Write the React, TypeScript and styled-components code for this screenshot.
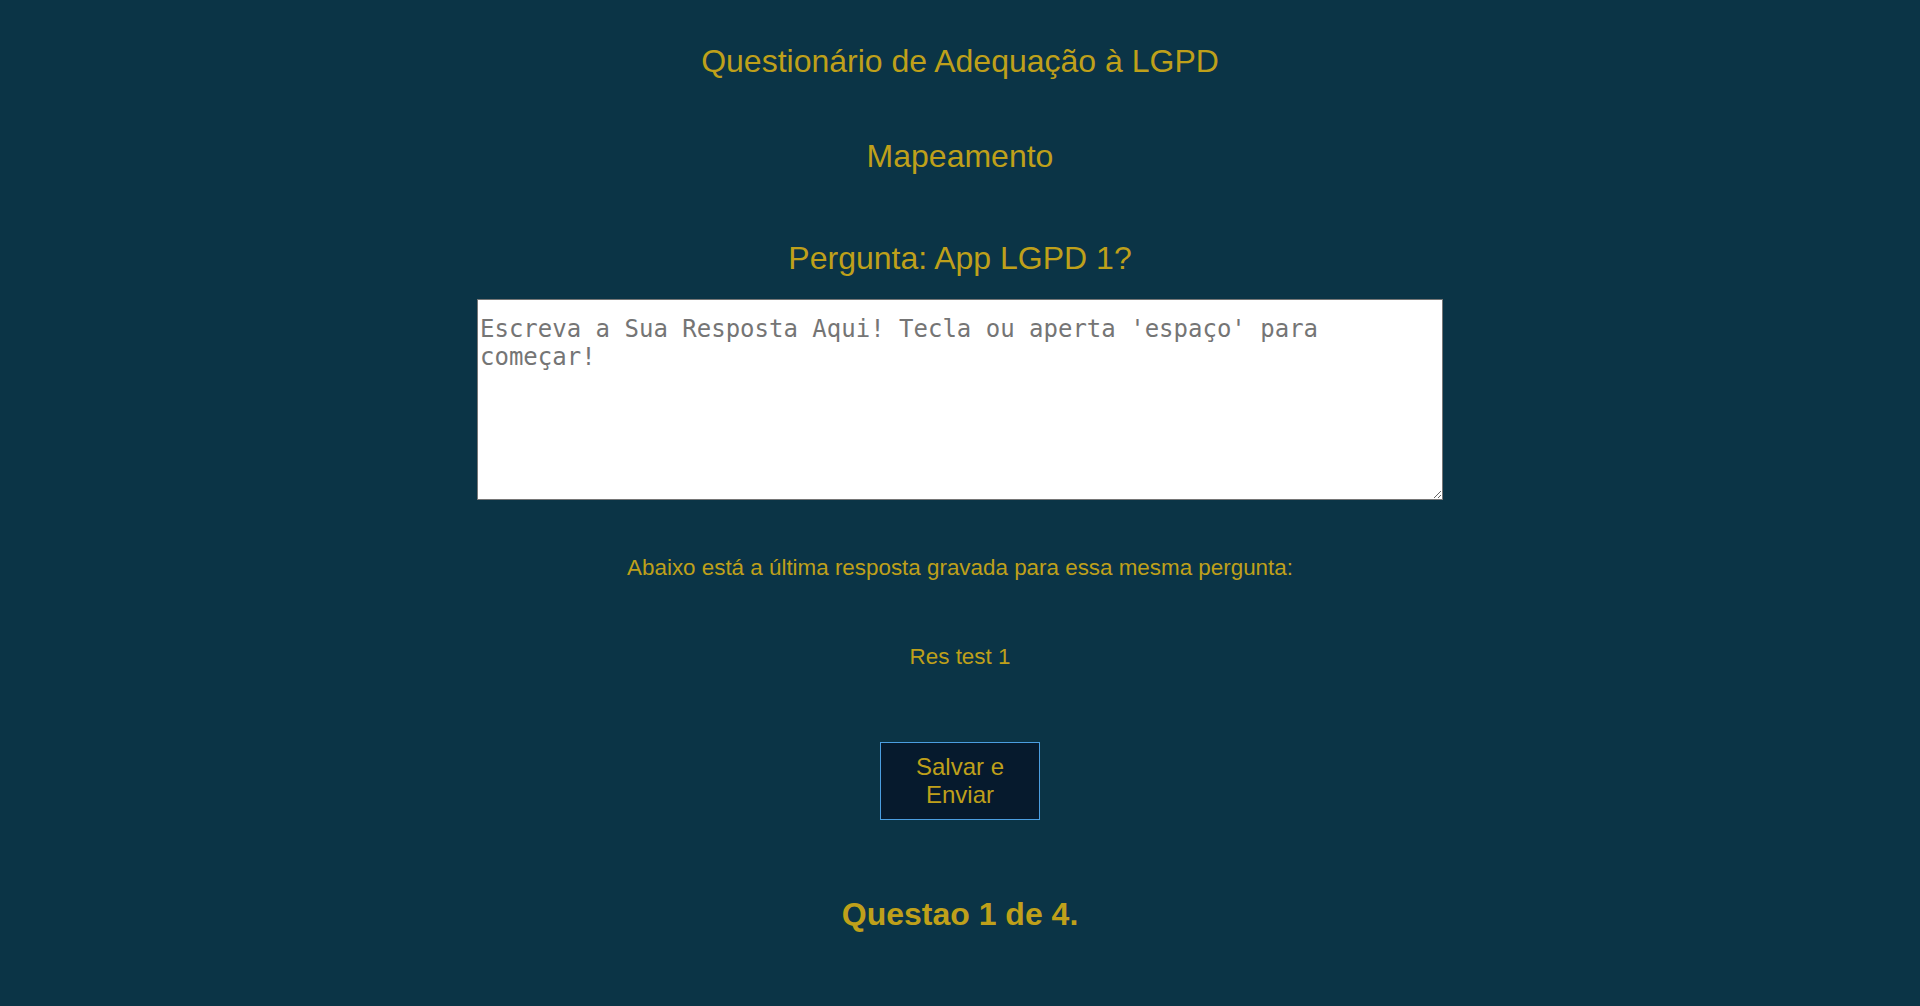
import styled, { createGlobalStyle } from "styled-components";

const GlobalStyle = createGlobalStyle`
  html, body {
    margin: 0;
    padding: 0;
    background: #0b3446;
  }
  body {
    font-family: "Liberation Sans", Arial, sans-serif;
    min-height: 100vh;
  }
`;

const Page = styled.main`
  display: flex;
  flex-direction: column;
  align-items: center;
  padding-top: 43px;
  color: #bfa01a;
  min-height: 1006px;
  box-sizing: border-box;
`;

const Heading = styled.h1<{ gap?: number }>`
  margin: ${(p) => p.gap ?? 0}px 0 0;
  font-size: 32px;
  font-weight: 400;
  line-height: normal;
  text-align: center;
`;

const AnswerBox = styled.textarea`
  margin-top: 22px;
  width: 966px;
  height: 201px;
  box-sizing: border-box;
  padding: 15px 2px 2px;
  border: 1px solid #767676;
  background: #ffffff;
  font-family: "DejaVu Sans Mono", monospace;
  font-size: 24px;
  color: #222;

  &::placeholder {
    color: #757575;
  }
`;

const Note = styled.p<{ gap: number }>`
  margin: ${(p) => p.gap}px 0 0;
  font-size: 22.4px;
  line-height: normal;
  text-align: center;
`;

const SendButton = styled.button`
  margin-top: 71.5px;
  width: 160px;
  padding: 10px;
  background: #061a2d;
  border: 1px solid #4b9ee0;
  color: #bfa01a;
  font-family: "Liberation Sans", Arial, sans-serif;
  font-size: 24px;
  line-height: normal;
  cursor: pointer;
`;

const Counter = styled.h2`
  margin: 76px 0 0;
  font-size: 32px;
  font-weight: 700;
  line-height: normal;
`;

export default function App() {
  return (
    <>
      <GlobalStyle />
      <Page>
        <Heading>Questionário de Adequação à LGPD</Heading>
        <Heading gap={58}>Mapeamento</Heading>
        <Heading gap={65}>Pergunta: App LGPD 1?</Heading>
        <AnswerBox placeholder="Escreva a Sua Resposta Aqui! Tecla ou aperta 'espaço' para começar!" />
        <Note gap={55}>Abaixo está a última resposta gravada para essa mesma pergunta:</Note>
        <Note gap={63}>Res test 1</Note>
        <SendButton>Salvar e Enviar</SendButton>
        <Counter>Questao 1 de 4.</Counter>
      </Page>
    </>
  );
}
